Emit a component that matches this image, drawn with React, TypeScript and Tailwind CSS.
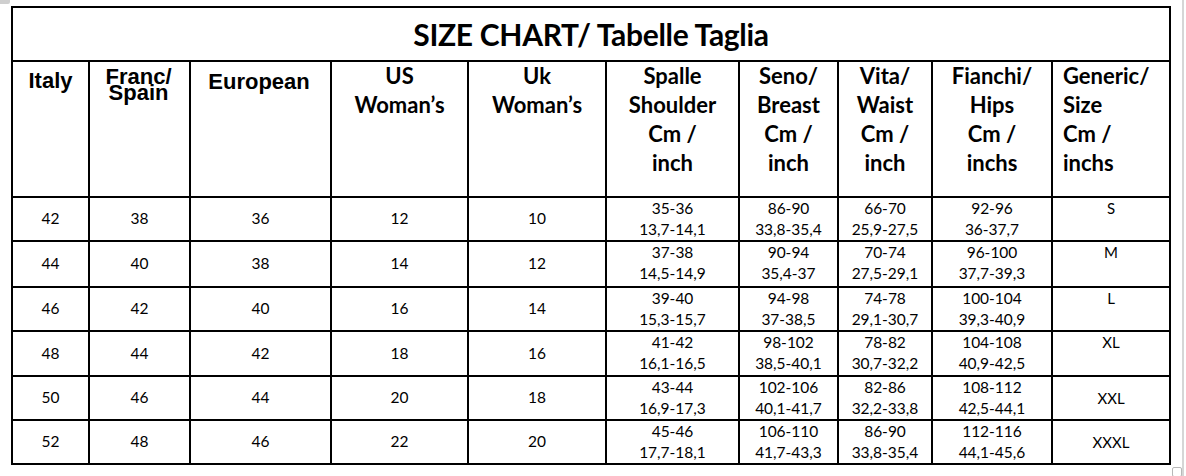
import React from 'react';

const calibri = "font-['Lato','Open_Sans',sans-serif]";
const arial = "font-['Liberation_Sans',Arial,sans-serif]";

const rows = [
  { it: '42', fr: '38', eu: '36', us: '12', uk: '10', sh: ['35-36', '13,7-14,1'], br: ['86-90', '33,8-35,4'], wa: ['66-70', '25,9-27,5'], hi: ['92-96', '36-37,7'], size: 'S', h: 'h-[42px]', top: true },
  { it: '44', fr: '40', eu: '38', us: '14', uk: '12', sh: ['37-38', '14,5-14,9'], br: ['90-94', '35,4-37'], wa: ['70-74', '27,5-29,1'], hi: ['96-100', '37,7-39,3'], size: 'M', h: 'h-[44px]', top: true },
  { it: '46', fr: '42', eu: '40', us: '16', uk: '14', sh: ['39-40', '15,3-15,7'], br: ['94-98', '37-38,5'], wa: ['74-78', '29,1-30,7'], hi: ['100-104', '39,3-40,9'], size: 'L', h: 'h-[42px]', top: true },
  { it: '48', fr: '44', eu: '42', us: '18', uk: '16', sh: ['41-42', '16,1-16,5'], br: ['98-102', '38,5-40,1'], wa: ['78-82', '30,7-32,2'], hi: ['104-108', '40,9-42,5'], size: 'XL', h: 'h-[43px]', top: true },
  { it: '50', fr: '46', eu: '44', us: '20', uk: '18', sh: ['43-44', '16,9-17,3'], br: ['102-106', '40,1-41,7'], wa: ['82-86', '32,2-33,8'], hi: ['108-112', '42,5-44,1'], size: 'XXL', h: 'h-[42px]', top: false },
  { it: '52', fr: '48', eu: '46', us: '22', uk: '20', sh: ['45-46', '17,7-18,1'], br: ['106-110', '41,7-43,3'], wa: ['86-90', '33,8-35,4'], hi: ['112-116', '44,1-45,6'], size: 'XXXL', h: 'h-[42px]', top: false },
];

const calibriHeads = [
  ['US', 'Woman’s'],
  ['Uk', 'Woman’s'],
  ['Spalle', 'Shoulder', 'Cm /', 'inch'],
  ['Seno/', 'Breast', 'Cm /', 'inch'],
  ['Vita/', 'Waist', 'Cm /', 'inch'],
  ['Fianchi/', 'Hips', 'Cm /', 'inchs'],
];

function Single({ value, h }: { value: string; h: string }) {
  return (
    <div className={`${h} bg-white flex items-center justify-center text-[15.5px] text-black`}>
      {value}
    </div>
  );
}

function Double({ lines, h }: { lines: string[]; h: string }) {
  return (
    <div className={`${h} bg-white flex flex-col items-center text-[15.5px] leading-[21px] text-black`}>
      <span>{lines[0]}</span>
      <span>{lines[1]}</span>
    </div>
  );
}

export default function App() {
  return (
    <div className="relative w-[1186px] h-[476px] bg-white overflow-hidden">
      <div className="absolute left-0 top-0 w-[10px] h-[4px] rounded-br-[2px] bg-[#cfcfcf]" />
      <div className="absolute left-[1182px] top-0 w-[2px] h-[476px] bg-[#d6d6d6]" />
      <div className="absolute left-[1172px] top-[467px] w-[10px] h-[10px] rounded-[2px] border border-[#b8b8b8] bg-white" />

      <div className="pl-[11px] pt-[6px]">
        <div
          className={`inline-grid grid-cols-[75px_99px_139px_135px_136px_131px_97px_92px_118px_116px] gap-[2px] bg-black p-[2px] ${calibri}`}
        >
          <div className="col-span-10 h-[52px] bg-white flex items-center justify-center text-[30px] font-bold text-black tracking-[-0.3px]">
            SIZE CHART/ Tabelle Taglia
          </div>

          <div className={`h-[134px] bg-white text-center pt-[6px] text-[22px] leading-[25px] font-bold ${arial}`}>Italy</div>
          <div className={`h-[134px] bg-white text-center pt-[7px] pr-[2px] text-[22px] leading-[16px] font-bold ${arial}`}>
            <div>Franc/</div>
            <div>Spain</div>
          </div>
          <div className={`h-[134px] bg-white text-center pt-[7px] pr-[3px] text-[22px] leading-[25px] font-bold ${arial}`}>European</div>
          {calibriHeads.map((lines, i) => (
            <div key={i} className="h-[134px] bg-white text-[22px] leading-[29px] font-bold">
              <div className="-mt-[1px] flex flex-col items-center">
                {lines.map((l) => (
                  <span key={l}>{l}</span>
                ))}
              </div>
            </div>
          ))}
          <div className="h-[134px] bg-white pl-[10px] text-[22px] leading-[29px] font-bold">
            <div className="-mt-[1px] flex flex-col items-start">
              <span>Generic/</span>
              <span>Size</span>
              <span>Cm /</span>
              <span>inchs</span>
            </div>
          </div>

          {rows.map((r) => (
            <React.Fragment key={r.it}>
              <Single value={r.it} h={r.h} />
              <Single value={r.fr} h={r.h} />
              <Single value={r.eu} h={r.h} />
              <Single value={r.us} h={r.h} />
              <Single value={r.uk} h={r.h} />
              <Double lines={r.sh} h={r.h} />
              <Double lines={r.br} h={r.h} />
              <Double lines={r.wa} h={r.h} />
              <Double lines={r.hi} h={r.h} />
              {r.top ? (
                <div className={`${r.h} bg-white text-center text-[15px] leading-[21px] text-black`}>{r.size}</div>
              ) : (
                <div className={`${r.h} bg-white flex items-center justify-center text-[15px] text-black`}>{r.size}</div>
              )}
            </React.Fragment>
          ))}
        </div>
      </div>
    </div>
  );
}
